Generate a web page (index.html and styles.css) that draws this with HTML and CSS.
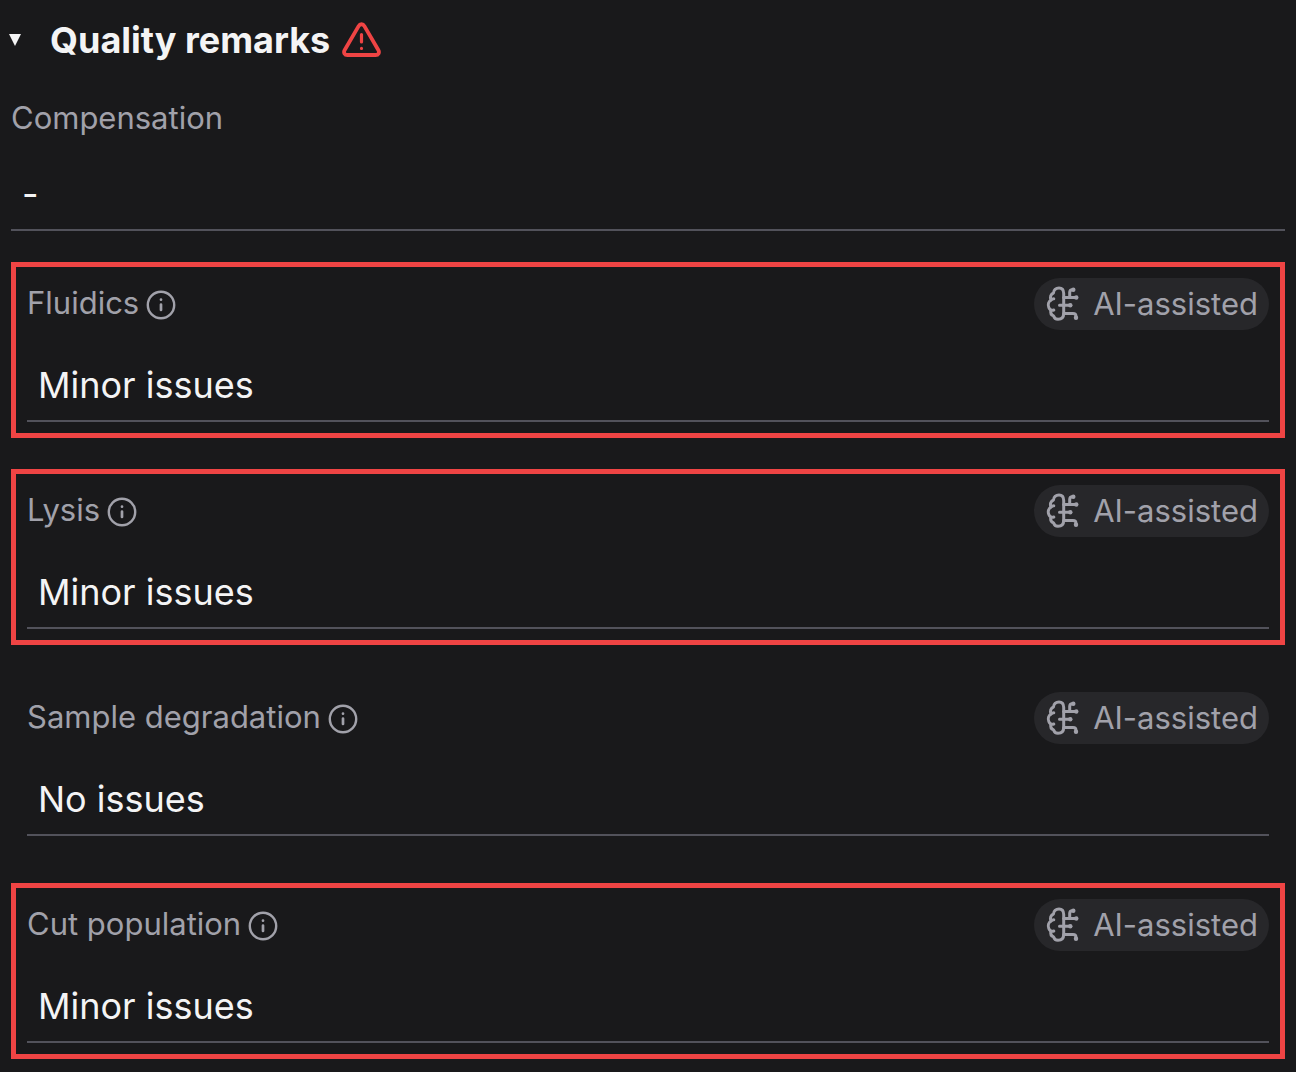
FILE: index.html
```html
<!DOCTYPE html>
<html lang="en">
<head>
  <meta charset="UTF-8">
  <meta name="viewport" content="width=device-width, initial-scale=1">
  <title>Quality remarks</title>
  <link rel="stylesheet" href="styles.css">
</head>
<body>

  <!-- Shared icons -->
  <svg class="sprite" aria-hidden="true">
    <symbol id="icon-info" viewBox="0 0 32 32">
      <circle cx="16" cy="17" r="13.2" stroke-width="2.4"/>
      <path d="M16 16.5v5.5M16 11.6v.1" stroke-width="2.7"/>
    </symbol>
    <symbol id="icon-brain" viewBox="0 0 36 36">
      <path d="M18.7 7.5C18.7 4 17 1.9 14 1.9C10.8 1.9 8.6 4 8.5 7C5.8 8 4.7 11 6 14C3.6 15.5 2.6 18.6 3.8 21.5C4.2 22.6 5 23.5 5.9 24C5.2 27 6.4 29 8.6 29.8C9.2 32 10.8 33.2 13 33.2C16.6 33.2 18.7 31 18.7 27.5Z"/>
      <path d="M6 14c.8-.8 1.7-1.2 2.8-1.2M5.9 24c.9.4 1.9.4 2.9 0"/>
      <path d="M18.7 11.5h12.5M24.7 11.5V6.5c0-1.8 1-2.8 2.8-2.8M14.5 19.2h11M18.7 27.5h9.3c2 0 3 1 3 2.8v1.4"/>
      <g class="node">
        <circle cx="28.3" cy="3.7" r="2.2"/>
        <circle cx="31.3" cy="11.5" r="2.2"/>
        <circle cx="25.3" cy="19.2" r="2.2"/>
        <circle cx="31" cy="31.7" r="2.2"/>
      </g>
    </symbol>
  </svg>

  <details class="remarks" open>
    <summary class="remarks-header">
      <svg class="caret" viewBox="0 0 12 12" aria-hidden="true"><path d="M0 0h12L6 12z"/></svg>
      <h2>Quality remarks</h2>
      <svg class="warning" viewBox="0 0 40 36" aria-hidden="true">
        <path d="M16.6 4.1L2.7 28C1.2 30.6 2.6 33 5.4 33H33.6C36.4 33 37.8 30.6 36.3 28L22.4 4.1C21 1.6 18 1.6 16.6 4.1Z" stroke-width="3.8"/>
        <path d="M19.5 12.5v7.5M19.5 26.4v.1" stroke-width="3.2"/>
      </svg>
    </summary>

    <div class="fields">
      <div class="field">
        <div class="field-top">
          <label for="compensation">Compensation</label>
        </div>
        <input type="text" id="compensation" value="-">
      </div>

      <div class="field assisted issue">
        <div class="field-top">
          <label for="fluidics">Fluidics</label>
          <svg class="info"><use href="#icon-info"/></svg>
          <span class="badge"><svg class="brain"><use href="#icon-brain"/></svg>AI-assisted</span>
        </div>
        <input type="text" id="fluidics" value="Minor issues">
      </div>

      <div class="field assisted issue">
        <div class="field-top">
          <label for="lysis">Lysis</label>
          <svg class="info"><use href="#icon-info"/></svg>
          <span class="badge"><svg class="brain"><use href="#icon-brain"/></svg>AI-assisted</span>
        </div>
        <input type="text" id="lysis" value="Minor issues">
      </div>

      <div class="field assisted">
        <div class="field-top">
          <label for="degradation">Sample degradation</label>
          <svg class="info"><use href="#icon-info"/></svg>
          <span class="badge"><svg class="brain"><use href="#icon-brain"/></svg>AI-assisted</span>
        </div>
        <input type="text" id="degradation" value="No issues">
      </div>

      <div class="field assisted issue">
        <div class="field-top">
          <label for="population">Cut population</label>
          <svg class="info"><use href="#icon-info"/></svg>
          <span class="badge"><svg class="brain"><use href="#icon-brain"/></svg>AI-assisted</span>
        </div>
        <input type="text" id="population" value="Minor issues">
      </div>
    </div>
  </details>

</body>
</html>
```
FILE: styles.css
```css
* {
  box-sizing: border-box;
}

body {
  margin: 0;
  padding: 16px 11px 13px;
  background: #19191b;
  color: #f4f4f5;
  font-family: Inter, sans-serif;
}

svg {
  flex: none;
  fill: none;
  stroke: currentColor;
  stroke-linecap: round;
  stroke-linejoin: round;
}

.sprite {
  display: none;
}

.remarks-header {
  display: flex;
  align-items: center;
  height: 48px;
  list-style: none;
  cursor: pointer;
}

.remarks-header h2 {
  margin: 0 12px 0 29px;
  font-size: 36px;
  font-weight: 700;
  line-height: 48px;
}

.caret {
  width: 12px;
  height: 12px;
  margin-left: -2px;
  fill: currentColor;
  stroke: none;
}

.warning {
  width: 40px;
  height: 36px;
  color: #ef4444;
}

.fields {
  display: flex;
  flex-direction: column;
  gap: 31px;
  padding-top: 35px;
}

.field-top {
  display: flex;
  align-items: center;
  color: #a1a1aa;
  font-size: 31px;
  line-height: 38px;
}

.field-top label {
  padding-bottom: 2px;
}

.assisted {
  padding: 11px;
  border: 5px solid transparent;
}

.issue {
  border-color: #ef4444;
}

.info {
  width: 32px;
  height: 32px;
  margin-left: 6px;
}

.badge {
  display: flex;
  align-items: center;
  gap: 12px;
  height: 52px;
  margin-left: auto;
  padding: 0 11px;
  border-radius: 26px;
  background: #27272a;
}

.brain {
  width: 36px;
  height: 36px;
  stroke-width: 3;
}

.node {
  fill: currentColor;
  stroke: none;
}

input {
  display: block;
  width: 100%;
  height: 72px;
  margin-top: 20px;
  padding: 0 11px;
  border: 0;
  border-bottom: 2px solid #52525b;
  border-radius: 0;
  background: transparent;
  color: inherit;
  font-family: inherit;
  font-size: 36px;
  outline: none;
}
```
